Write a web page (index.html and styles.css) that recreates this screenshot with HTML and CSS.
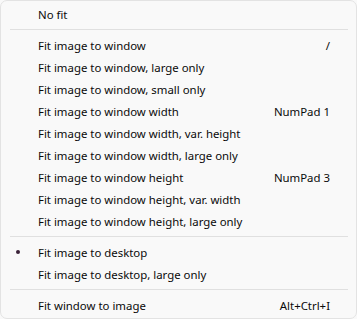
FILE: index.html
```html
<!DOCTYPE html>
<html lang="en">
<head>
    <meta charset="UTF-8">
    <title>Fit menu</title>
    <link rel="stylesheet" href="styles.css">
</head>
<body>
    <div class="menu">
        <div class="item"><span class="mark"></span><span class="label">No fit</span><span class="key"></span></div>
        <div class="sep"></div>
        <div class="item"><span class="mark"></span><span class="label">Fit image to window</span><span class="key">/</span></div>
        <div class="item"><span class="mark"></span><span class="label">Fit image to window, large only</span><span class="key"></span></div>
        <div class="item"><span class="mark"></span><span class="label">Fit image to window, small only</span><span class="key"></span></div>
        <div class="item"><span class="mark"></span><span class="label">Fit image to window width</span><span class="key">NumPad 1</span></div>
        <div class="item"><span class="mark"></span><span class="label">Fit image to window width, var. height</span><span class="key"></span></div>
        <div class="item"><span class="mark"></span><span class="label">Fit image to window width, large only</span><span class="key"></span></div>
        <div class="item"><span class="mark"></span><span class="label">Fit image to window height</span><span class="key">NumPad 3</span></div>
        <div class="item"><span class="mark"></span><span class="label">Fit image to window height, var. width</span><span class="key"></span></div>
        <div class="item"><span class="mark"></span><span class="label">Fit image to window height, large only</span><span class="key"></span></div>
        <div class="sep"></div>
        <div class="item"><span class="mark"><span class="dot"></span></span><span class="label">Fit image to desktop</span><span class="key"></span></div>
        <div class="item"><span class="mark"></span><span class="label">Fit image to desktop, large only</span><span class="key"></span></div>
        <div class="sep"></div>
        <div class="item"><span class="mark"></span><span class="label">Fit window to image</span><span class="key">Alt+Ctrl+I</span></div>
    </div>
</body>
</html>
```

FILE: styles.css
```css
body {
    margin: 0;
    background-color: #f9f9f9;
    font-family: "Noto Sans", "Open Sans", sans-serif;
    font-size: 11.4px;
    color: #0a0a0a;
}
.menu {
    width: 357px;
    height: 319px;
    box-sizing: border-box;
    border: 1px solid #e3e3e3;
    border-radius: 7px;
    background-color: #f9f9f9;
    padding: 2px 0;
}
.item {
    display: flex;
    align-items: center;
    height: 22px;
    padding-right: 26px;
}
.mark {
    width: 37px;
    display: flex;
    justify-content: center;
    padding-right: 4px;
    box-sizing: border-box;
}
.dot {
    width: 4px;
    height: 4px;
    border-radius: 50%;
    background-color: #3a2238;
}
.label {
    flex: 1;
}
.key {
    text-align: right;
}
.sep {
    height: 1px;
    background-color: #e0e0e0;
    margin: 4px 8px 4px 9px;
}
```
